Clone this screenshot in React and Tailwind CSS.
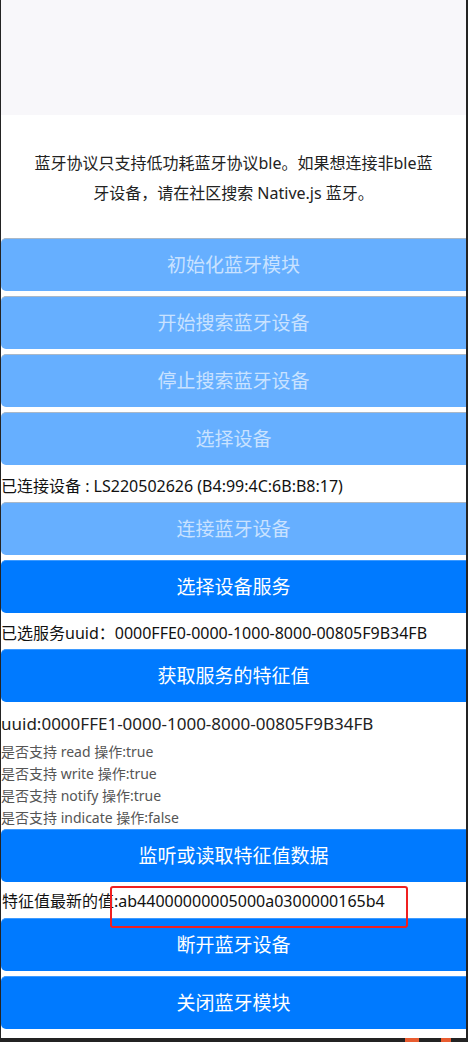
import React from "react";

const font = { fontFamily: '"Noto Sans", "Noto Sans CJK SC", sans-serif' };

function Btn({ children, light }) {
  return (
    <div
      className={
        "h-[53px] mb-[5px] rounded-l-[5px] flex items-center justify-center text-[19px] " +
        (light
          ? "bg-[#66afff] text-[#c9e2ff] border-t border-[#a9b8c8]"
          : "bg-[#007aff] text-white border-t border-[#3d9aff]")
      }
    >
      {children}
    </div>
  );
}

export default function App() {
  return (
    <div
      className="w-[468px] h-[1042px] bg-[#232323] flex flex-col overflow-hidden"
      style={font}
    >
      <div className="flex h-[1038px]">
        <div className="w-[1px] bg-[#232323]" />
        <div className="w-[465px] bg-white flex flex-col">
          <div className="h-[115px] bg-[#f8f7fa]" />
          <div className="pt-[33px] pb-[30px] px-[28px] text-center text-[16px] leading-[30px] text-[#222]">
            蓝牙协议只支持低功耗蓝牙协议ble。如果想连接非ble蓝牙设备，请在社区搜索 Native.js 蓝牙。
          </div>
          <Btn light>初始化蓝牙模块</Btn>
          <Btn light>开始搜索蓝牙设备</Btn>
          <Btn light>停止搜索蓝牙设备</Btn>
          <Btn light>选择设备</Btn>
          <div className="h-[32px] leading-[32px] text-[16px] text-[#111] whitespace-nowrap">
            已连接设备 : LS220502626 (B4:99:4C:6B:B8:17)
          </div>
          <Btn light>连接蓝牙设备</Btn>
          <Btn>选择设备服务</Btn>
          <div className="h-[31px] leading-[31px] text-[16px] text-[#111] whitespace-nowrap">
            已选服务uuid：0000FFE0-0000-1000-8000-00805F9B34FB
          </div>
          <Btn>获取服务的特征值</Btn>
          <div className="h-[34px] leading-[34px] text-[17px] text-[#222] whitespace-nowrap">
            uuid:0000FFE1-0000-1000-8000-00805F9B34FB
          </div>
          <div className="text-[14px] leading-[22px] text-[#555]">
            <div>是否支持 read 操作:true</div>
            <div>是否支持 write 操作:true</div>
            <div>是否支持 notify 操作:true</div>
            <div>是否支持 indicate 操作:false</div>
          </div>
          <div className="h-[55px]">
            <Btn>监听或读取特征值数据</Btn>
          </div>
          <div className="relative h-[34px] leading-[34px] text-[16px] text-[#111] whitespace-nowrap pl-[1px]">
            特征值最新的值:ab44000000005000a0300000165b4
            <div className="absolute left-[109px] top-[2px] w-[298px] h-[42px] border-2 border-[#f02020] rounded-[3px] z-10" />
          </div>
          <Btn>断开蓝牙设备</Btn>
          <Btn>关闭蓝牙模块</Btn>
        </div>
        <div className="w-[2px] bg-[#232323]" />
      </div>
      <div className="h-[4px] flex">
        <div className="w-[405px]" />
        <div className="w-[14px] bg-[#e85c30]" />
        <div className="w-[22px]" />
        <div className="w-[10px] bg-[#e85c30]" />
      </div>
    </div>
  );
}
